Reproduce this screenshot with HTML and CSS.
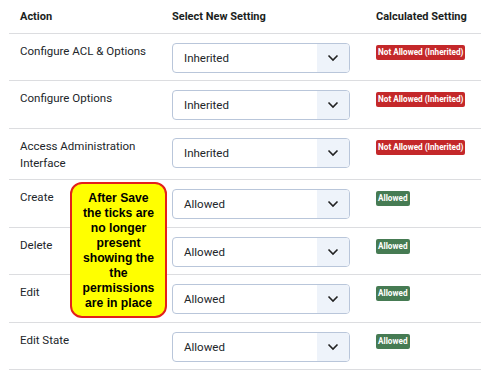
FILE: index.html
```html
<!DOCTYPE html>
<html lang="en">
<head>
  <meta charset="UTF-8" />
  <title>Permissions</title>
  <link rel="stylesheet" href="styles.css">
</head>
<body>
<div class="perm-wrap">
  <table class="perm-table">
    <colgroup>
      <col class="col-action" />
      <col class="col-select" />
      <col class="col-calc" />
    </colgroup>
    <thead>
      <tr>
        <th>Action</th>
        <th>Select New Setting</th>
        <th>Calculated Setting</th>
      </tr>
    </thead>
    <tbody>
      <tr>
        <td>Configure ACL &amp; Options</td>
        <td><div class="fake-select"><span class="fs-value">Inherited</span><span class="fs-arrow"><svg width="12" height="8" viewBox="0 0 12 8"><path d="M1.5 1.5 L6 6 L10.5 1.5" fill="none" stroke="#222" stroke-width="1.6"/></svg></span></div></td>
        <td><span class="badge badge-deny">Not Allowed (Inherited)</span></td>
      </tr>
      <tr>
        <td>Configure Options</td>
        <td><div class="fake-select"><span class="fs-value">Inherited</span><span class="fs-arrow"><svg width="12" height="8" viewBox="0 0 12 8"><path d="M1.5 1.5 L6 6 L10.5 1.5" fill="none" stroke="#222" stroke-width="1.6"/></svg></span></div></td>
        <td><span class="badge badge-deny">Not Allowed (Inherited)</span></td>
      </tr>
      <tr>
        <td>Access Administration Interface</td>
        <td><div class="fake-select"><span class="fs-value">Inherited</span><span class="fs-arrow"><svg width="12" height="8" viewBox="0 0 12 8"><path d="M1.5 1.5 L6 6 L10.5 1.5" fill="none" stroke="#222" stroke-width="1.6"/></svg></span></div></td>
        <td><span class="badge badge-deny">Not Allowed (Inherited)</span></td>
      </tr>
      <tr>
        <td>Create</td>
        <td><div class="fake-select"><span class="fs-value">Allowed</span><span class="fs-arrow"><svg width="12" height="8" viewBox="0 0 12 8"><path d="M1.5 1.5 L6 6 L10.5 1.5" fill="none" stroke="#222" stroke-width="1.6"/></svg></span></div></td>
        <td><span class="badge badge-allow">Allowed</span></td>
      </tr>
      <tr>
        <td>Delete</td>
        <td><div class="fake-select"><span class="fs-value">Allowed</span><span class="fs-arrow"><svg width="12" height="8" viewBox="0 0 12 8"><path d="M1.5 1.5 L6 6 L10.5 1.5" fill="none" stroke="#222" stroke-width="1.6"/></svg></span></div></td>
        <td><span class="badge badge-allow">Allowed</span></td>
      </tr>
      <tr>
        <td>Edit</td>
        <td><div class="fake-select"><span class="fs-value">Allowed</span><span class="fs-arrow"><svg width="12" height="8" viewBox="0 0 12 8"><path d="M1.5 1.5 L6 6 L10.5 1.5" fill="none" stroke="#222" stroke-width="1.6"/></svg></span></div></td>
        <td><span class="badge badge-allow">Allowed</span></td>
      </tr>
      <tr>
        <td>Edit State</td>
        <td><div class="fake-select"><span class="fs-value">Allowed</span><span class="fs-arrow"><svg width="12" height="8" viewBox="0 0 12 8"><path d="M1.5 1.5 L6 6 L10.5 1.5" fill="none" stroke="#222" stroke-width="1.6"/></svg></span></div></td>
        <td><span class="badge badge-allow">Allowed</span></td>
      </tr>
    </tbody>
  </table>
  <div class="callout">After Save<br>the ticks are<br>no longer<br>present<br>showing the<br>the<br>permissions<br>are in place</div>
</div>
</body>
</html>
```

FILE: styles.css
```css
* { box-sizing: border-box; }
body {
  margin: 0;
  font-family: Roboto, 'Noto Sans', sans-serif;
  background: #ffffff;
  color: #22262a;
  overflow: hidden;
}
.perm-wrap {
  position: relative;
  padding-left: 9px;
}
.perm-table {
  width: 472px;
  border-collapse: collapse;
  table-layout: fixed;
}
.col-action { width: 152px; }
.col-select { width: 204px; }
.col-calc { width: 116px; }
.perm-table th {
  text-align: left;
  font-size: 11px;
  font-weight: 700;
  line-height: 15px;
  padding: 9px 11px 8.5px;
  color: #1b1e21;
  white-space: nowrap;
  border-bottom: 1px solid #dcdde0;
}
.perm-table td {
  vertical-align: top;
  font-size: 11.5px;
  line-height: 17px;
  padding: 9px 11px 7.5px;
  border-bottom: 1px solid #dcdde0;
}
.perm-table td:nth-child(2) { padding-right: 15px; }
.fake-select {
  display: flex;
  height: 30px;
  width: 178px;
  border: 1px solid #b9c6da;
  border-radius: 4px;
  overflow: hidden;
  background: #fff;
}
.fs-value {
  flex: 1;
  padding-left: 11px;
  font-size: 11.5px;
  line-height: 28px;
}
.fs-arrow {
  width: 32px;
  background: #eef3fa;
  display: flex;
  align-items: center;
  justify-content: center;
}
.badge {
  display: inline-block;
  margin-top: 2px;
  padding: 0 2px;
  height: 15px;
  line-height: 15px;
  font-size: 8.2px;
  font-weight: 700;
  color: #fff;
  border-radius: 2px;
  white-space: nowrap;
}
.badge-deny { background: #c4282a; }
.badge-allow { background: #467b53; }
.callout {
  position: absolute;
  left: 70px;
  top: 182px;
  width: 97px;
  height: 136px;
  padding: 7px 0;
  background: #ffff00;
  border: 2px solid #e3201c;
  border-radius: 12px;
  font-family: 'Liberation Sans', Arial, sans-serif;
  font-weight: 700;
  font-size: 12.2px;
  line-height: 15px;
  text-align: center;
  white-space: nowrap;
  color: #000;
}
```
